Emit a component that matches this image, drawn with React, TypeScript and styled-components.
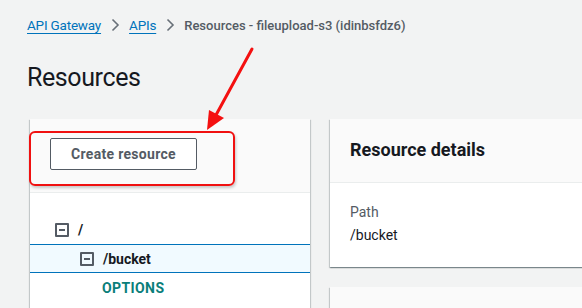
import React from "react";
import styled, { createGlobalStyle } from "styled-components";

const GlobalStyle = createGlobalStyle`
  html, body {
    margin: 0;
    padding: 0;
    background: #f2f3f3;
    font-family: Roboto, "Noto Sans", Arial, sans-serif;
    color: #16191f;
    overflow: hidden;
  }
`;

const Page = styled.div`
  position: relative;
  width: 582px;
  height: 308px;
  overflow: hidden;
`;

const Header = styled.div`
  padding: 14px 0 0 27px;
`;

const Breadcrumbs = styled.nav`
  display: flex;
  align-items: center;
  font-size: 13.5px;
  height: 22px;
`;

const Crumb = styled.a`
  color: #0073bb;
  text-decoration: underline;
  text-underline-offset: 3px;
  letter-spacing: -0.2px;
`;

const Current = styled.span`
  color: #545b64;
  font-weight: 500;
  font-size: 13px;
`;

const Sep = styled.span`
  display: inline-flex;
  width: 28px;
  justify-content: center;
`;

const Title = styled.h1`
  margin: 24px 0 0;
  font-size: 25px;
  font-weight: 400;
  line-height: 36px;
  letter-spacing: -0.4px;
`;

const Content = styled.div`
  display: grid;
  grid-template-columns: 280px 300px;
  gap: 20px;
  padding: 23px 0 0 30px;
`;

const LeftPanel = styled.section`
  background: #fff;
  box-shadow: 0 1px 1px rgba(0, 28, 36, 0.3), 1px 1px 1px rgba(0, 28, 36, 0.15),
    -1px 1px 1px rgba(0, 28, 36, 0.15);
  height: 200px;
`;

const PanelHead = styled.div<{ $h: number }>`
  height: ${(p) => p.$h}px;
  background: #fafafa;
  border-bottom: 1px solid #eaeded;
  box-sizing: border-box;
  display: flex;
  align-items: center;
  padding: 0 20px;
`;

const Button = styled.button`
  height: 32px;
  width: 147px;
  border: 1px solid #545b64;
  border-radius: 2px;
  background: #fff;
  color: #545b64;
  font-family: inherit;
  font-weight: 700;
  font-size: 14px;
  letter-spacing: 0.3px;
  margin-top: -4px;
`;

const Tree = styled.ul`
  list-style: none;
  margin: 0;
  padding: 22px 0 0;
`;

const Row = styled.li<{ $level: number; $selected?: boolean }>`
  display: flex;
  align-items: center;
  height: 27px;
  padding-left: ${(p) => 25 + p.$level * 25}px;
  background: ${(p) => (p.$selected ? "#f1faff" : "transparent")};
  border-top: 1px solid ${(p) => (p.$selected ? "#0073bb" : "transparent")};
  border-bottom: 1px solid ${(p) => (p.$selected ? "#0073bb" : "transparent")};
  font-size: 14px;
  font-weight: 700;
  color: #16191f;
`;

const Toggle = styled.span`
  width: 10px;
  height: 10px;
  border: 2px solid #545b64;
  border-radius: 1px;
  margin-right: 9px;
  position: relative;
  &::after {
    content: "";
    position: absolute;
    left: 2px;
    right: 2px;
    top: 4px;
    height: 2px;
    background: #545b64;
  }
`;

const Method = styled.span`
  color: #0a7e7a;
  padding-left: 22px;
  letter-spacing: 0.4px;
`;

const RightCol = styled.div`
  display: flex;
  flex-direction: column;
  gap: 20px;
`;

const Card = styled.section<{ $h?: number }>`
  background: #fff;
  ${(p) => (p.$h ? `height: ${p.$h}px;` : "")}
  box-shadow: 0 1px 1px rgba(0, 28, 36, 0.3), 1px 1px 1px rgba(0, 28, 36, 0.15),
    -1px 1px 1px rgba(0, 28, 36, 0.15);
`;

const CardTitle = styled.h2`
  margin: 0 0 3px;
  font-size: 18px;
  font-weight: 700;
`;

const CardBody = styled.div`
  padding: 18px 20px 20px;
  font-size: 14px;
`;

const Label = styled.div`
  color: #545b64;
  line-height: 22px;
`;

const Value = styled.div`
  line-height: 24px;
`;

const Highlight = styled.div`
  position: absolute;
  left: 29px;
  top: 131px;
  width: 202px;
  height: 51px;
  border: 2px solid #f01010;
  border-radius: 6px;
  box-shadow: 1px 2px 3px rgba(0, 0, 0, 0.2);
  pointer-events: none;
`;

const Arrow = styled.svg`
  position: absolute;
  left: 0;
  top: 0;
  pointer-events: none;
`;

const Chevron = () => (
  <svg width="10" height="14" viewBox="0 0 10 14">
    <path d="M2.5 1.5l5.5 5.5-5.5 5.5" fill="none" stroke="#687078" strokeWidth="1.6" />
  </svg>
);

export default function App() {
  return (
    <Page>
      <GlobalStyle />
      <Header>
        <Breadcrumbs>
          <Crumb>API Gateway</Crumb>
          <Sep>
            <Chevron />
          </Sep>
          <Crumb>APIs</Crumb>
          <Sep>
            <Chevron />
          </Sep>
          <Current>Resources - fileupload-s3 (idinbsfdz6)</Current>
        </Breadcrumbs>
        <Title>Resources</Title>
      </Header>
      <Content>
        <LeftPanel>
          <PanelHead $h={74}>
            <Button>Create resource</Button>
          </PanelHead>
          <Tree>
            <Row $level={0}>
              <Toggle />/
            </Row>
            <Row $level={1} $selected>
              <Toggle />/bucket
            </Row>
            <Row $level={1}>
              <Method>OPTIONS</Method>
            </Row>
          </Tree>
        </LeftPanel>
        <RightCol>
          <Card>
            <PanelHead $h={64}>
              <CardTitle>Resource details</CardTitle>
            </PanelHead>
            <CardBody>
              <Label>Path</Label>
              <Value>/bucket</Value>
            </CardBody>
          </Card>
          <Card $h={60}>
            <PanelHead $h={60} />
          </Card>
        </RightCol>
      </Content>
      <Highlight />
      <Arrow width="582" height="308" viewBox="0 0 582 308">
        <line x1="252" y1="49" x2="216" y2="115" stroke="#f41010" strokeWidth="3" strokeLinecap="round" />
        <path d="M207 130 L209 110 L224 118 Z" fill="#f41010" />
      </Arrow>
    </Page>
  );
}
